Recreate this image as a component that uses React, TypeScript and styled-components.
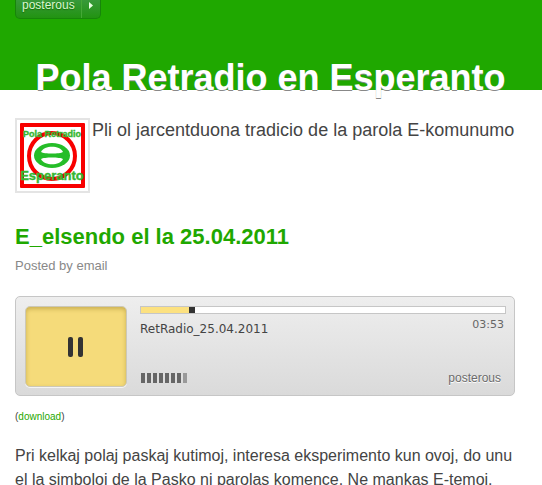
import React, { useState } from "react";
import styled, { createGlobalStyle } from "styled-components";

const GlobalStyle = createGlobalStyle`
  body {
    margin: 0;
    background: #fff;
    color: #444;
    font-family: "Liberation Sans", Arial, sans-serif;
    overflow: hidden;
  }
`;

const GREEN = "#1fa800";

const Header = styled.header`
  height: 90px;
  padding: 0 16px 0 15px;
  box-sizing: border-box;
  background: ${GREEN};
`;

const Badge = styled.nav`
  display: flex;
  width: max-content;
  height: 18px;
  border: 1px solid #17850a;
  border-top: 0;
  border-radius: 0 0 5px 5px;
  background: linear-gradient(#38993a, #229312);
  box-sizing: content-box;
`;

const BadgeLink = styled.a`
  padding: 0 6px;
  color: #d9f7d0;
  font-size: 12px;
  line-height: 10px;
  text-decoration: none;
  text-shadow: 0 1px 1px #16690b;
`;

const BadgeButton = styled.button`
  display: flex;
  width: 19px;
  padding: 2px 0 0 7px;
  border: 0;
  border-left: 1px solid #44a836;
  background: none;
`;

const SiteTitle = styled.h1`
  margin: 39px 0 0;
  color: #fff;
  font-size: 36px;
  line-height: 40px;
  text-align: center;
  white-space: nowrap;
  text-shadow: 0 1px 0 #888;
`;

const Main = styled.main`
  padding: 28px 27px 0 15px;
`;

const Intro = styled.section`
  display: flex;
  gap: 2px;
  margin-right: -12px;
`;

const Avatar = styled.svg`
  flex: none;
  width: 65px;
  height: 65px;
  padding: 3px;
  border: 2px solid #e4e4e4;
`;

const Tagline = styled.p`
  margin: 0;
  font-size: 18px;
  line-height: 24px;
`;

const PostTitle = styled.h2`
  margin: 31px 0 0;
  font-size: 22px;
  line-height: 26px;
`;

const PostLink = styled.a`
  color: ${GREEN};
  text-decoration: none;
`;

const Byline = styled.p`
  margin: 8px 0 0;
  color: #888;
  font-size: 13px;
  line-height: 16px;
`;

const Player = styled.section`
  display: flex;
  gap: 13px;
  height: 100px;
  margin-top: 22px;
  padding: 9px 8px 8px 9px;
  box-sizing: border-box;
  border: 1px solid #c6c6c6;
  border-radius: 5px;
  background: linear-gradient(#eee, #dadada);
`;

const PauseButton = styled.button`
  display: flex;
  flex: none;
  align-items: center;
  justify-content: center;
  width: 102px;
  height: 81px;
  padding: 0;
  border: 1px solid #ccc8b8;
  border-radius: 5px;
  background: #f5db7a;
  box-shadow: inset 0 2px 4px #c9ae50, 0 1px 0 #f4f4f4;
`;

const Controls = styled.div`
  display: flex;
  flex: 1;
  flex-direction: column;
`;

const Track = styled.div`
  display: flex;
  height: 6px;
  border: 1px solid #c6c6c6;
  background: #fff;
`;

const Played = styled.div`
  border-right: 6px solid #333;
  background: #fce180;
`;

const Row = styled.div`
  display: flex;
  justify-content: space-between;
`;

const InfoRow = styled(Row)`
  padding-right: 2px;
  font-family: "DejaVu Sans", sans-serif;
`;

const TrackName = styled.span`
  margin-top: 7px;
  color: #444;
  font-size: 12px;
  line-height: 16px;
`;

const Time = styled.time`
  margin-top: 4px;
  color: #666;
  font-size: 11px;
  line-height: 14px;
`;

const BottomRow = styled(Row)`
  align-items: center;
  margin-top: auto;
  padding: 0 5px 0 1px;
`;

const Brand = styled.a`
  color: #6b6b6b;
  font-size: 12px;
  line-height: 18px;
  text-decoration: none;
  text-shadow: 0 1px 0 #fff;
`;

const Download = styled.p`
  margin: 14px 0 0;
  font-size: 10px;
  line-height: 14px;
`;

const Body = styled.p`
  margin: 20px 0 0;
  font-size: 16px;
  line-height: 24px;
`;

const volumeBars = [0, 6, 12, 18, 24, 30, 36, 42];

export default function App() {
  const [playing, setPlaying] = useState(true);
  return (
    <>
      <GlobalStyle />
      <Header>
        <Badge>
          <BadgeLink href="#posterous">posterous</BadgeLink>
          <BadgeButton aria-label="Open menu">
            <svg width="4" height="7" viewBox="0 0 4 7">
              <path d="M0 0L4 3.5L0 7Z" fill="#e9ffe3" />
            </svg>
          </BadgeButton>
        </Badge>
        <SiteTitle>Pola Retradio en Esperanto</SiteTitle>
      </Header>
      <Main>
        <Intro>
          <Avatar viewBox="0 0 65 65" role="img" aria-label="Pola Retradio">
            <rect width="65" height="65" rx="1" fill="#f80000" />
            <rect x="4" y="4" width="57" height="57" fill="#fff" />
            <ellipse cx="32" cy="33" rx="23" ry="23" fill="#fff" stroke="#f80000" strokeWidth="4" />
            <ellipse cx="32" cy="32.5" rx="18" ry="12.5" fill="#25bd28" />
            <path d="M21 29C24 22 40 22 43 29C40 31 24 31 21 29Z" fill="#fff" />
            <path d="M21 36C24 34 40 34 43 36C40 43 24 43 21 36Z" fill="#fff" />
            <g
              fill="#35b631"
              stroke="#35b631"
              strokeWidth="0.4"
              fontFamily="Liberation Sans, Arial, sans-serif"
              fontWeight="700"
              textAnchor="middle"
            >
              <text x="32" y="14" fontSize="9">Pola Retradio</text>
              <text x="32" y="57" fontSize="13">Esperanto</text>
            </g>
          </Avatar>
          <Tagline>Pli ol jarcentduona tradicio de la parola E-komunumo</Tagline>
        </Intro>
        <article>
          <PostTitle>
            <PostLink href="#post">E_elsendo el la 25.04.2011</PostLink>
          </PostTitle>
          <Byline>Posted by email</Byline>
          <Player aria-label="Audio player">
            <PauseButton aria-label={playing ? "Pause" : "Play"} onClick={() => setPlaying(!playing)}>
              <svg width="16" height="20" viewBox="0 0 16 20" fill="#333">
                {playing ? (
                  <>
                    <rect width="5" height="20" rx="2" />
                    <rect x="10" width="5" height="20" rx="2" />
                  </>
                ) : (
                  <path d="M1 0L16 10L1 20Z" />
                )}
              </svg>
            </PauseButton>
            <Controls>
              <Track role="progressbar" aria-label="Progress" aria-valuenow={13}>
                <Played style={{ width: "13.3%" }} />
              </Track>
              <InfoRow>
                <TrackName>RetRadio_25.04.2011</TrackName>
                <Time>03:53</Time>
              </InfoRow>
              <BottomRow>
                <svg width="46" height="10" viewBox="0 0 46 10" role="img" aria-label="Volume">
                  {volumeBars.map((x) => (
                    <rect key={x} x={x} width="4" height="10" fill={x === 42 ? "#999" : "#666"} />
                  ))}
                </svg>
                <Brand href="#posterous">posterous</Brand>
              </BottomRow>
            </Controls>
          </Player>
          <Download>
            (<PostLink href="#download">download</PostLink>)
          </Download>
          <Body>
            Pri kelkaj polaj paskaj kutimoj, interesa eksperimento kun ovoj, do unu el la simboloj de la Pasko ni
            parolas komence. Ne mankas E-temoj.
          </Body>
        </article>
      </Main>
    </>
  );
}
